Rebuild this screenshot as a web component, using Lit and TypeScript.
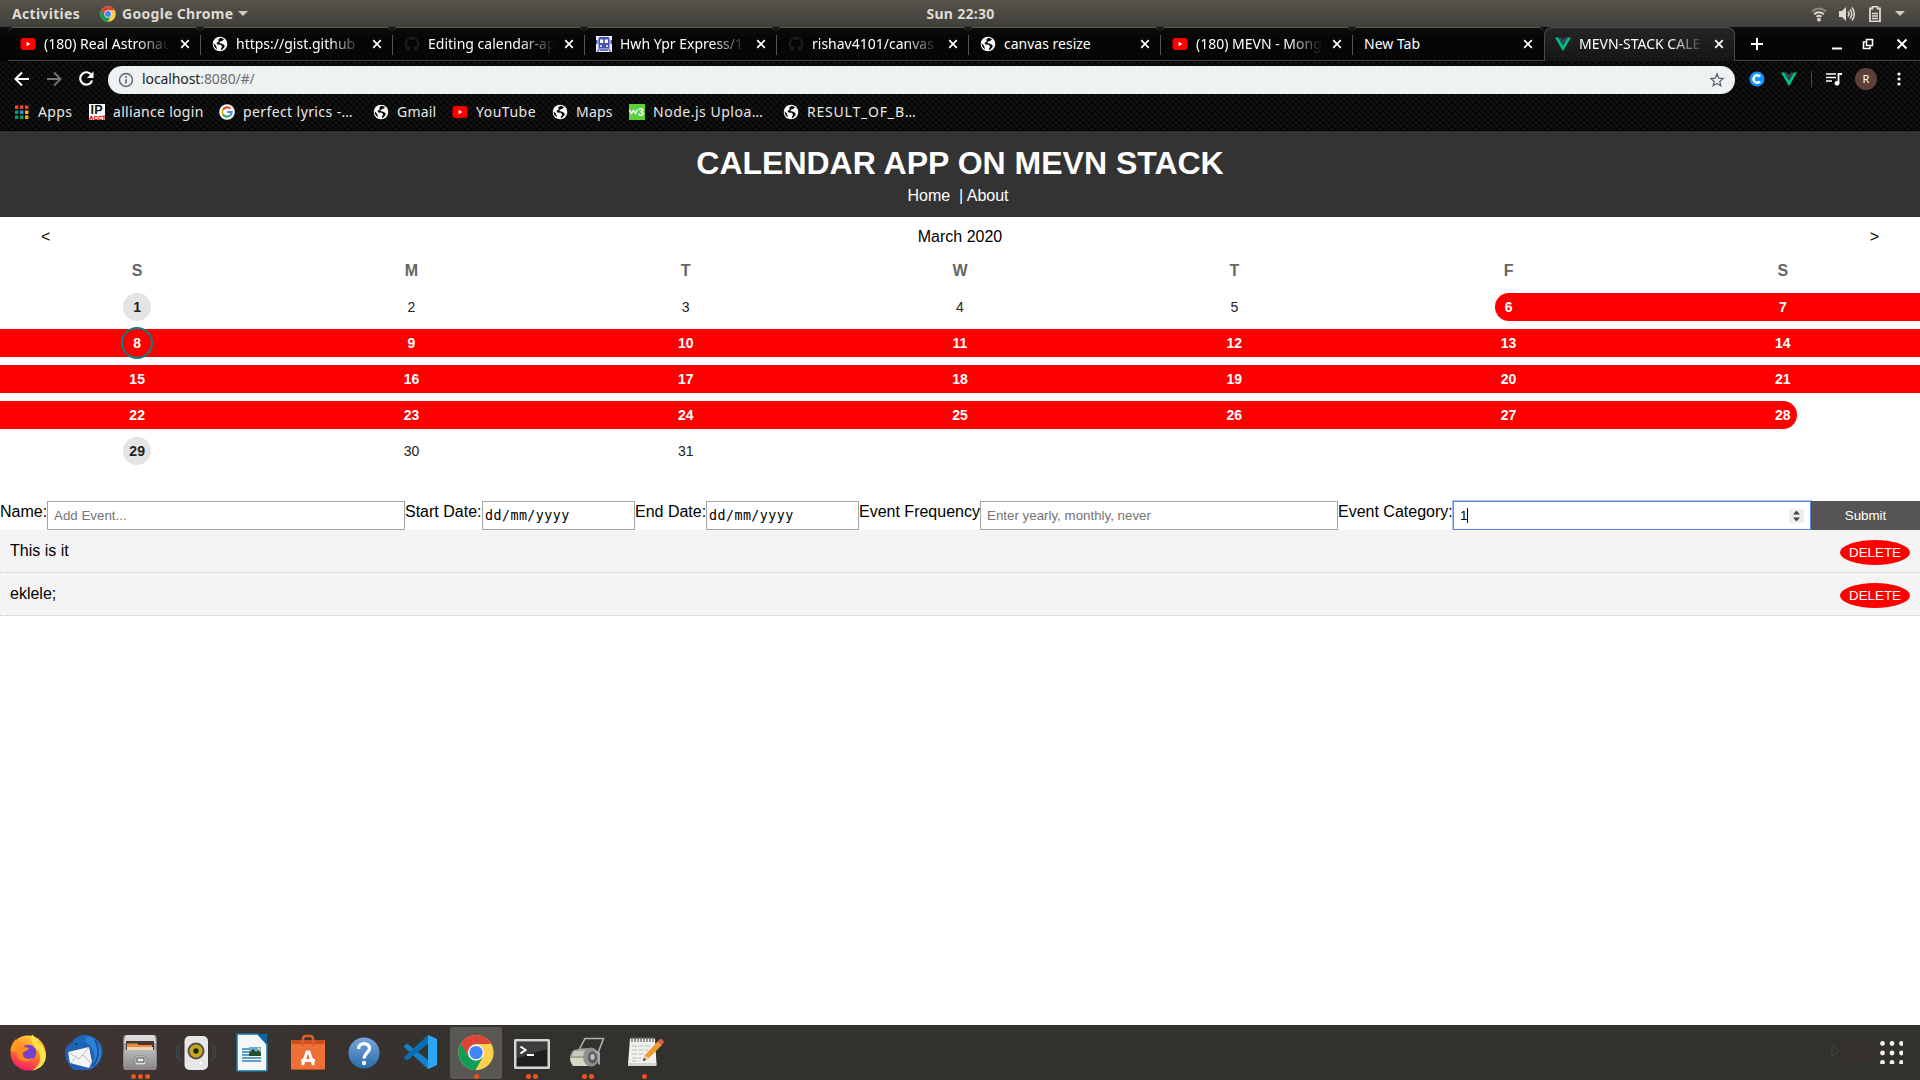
import { LitElement, html, svg, css, nothing, TemplateResult } from "lit";
import { customElement } from "lit/decorators.js";
import { classMap } from "lit/directives/class-map.js";
import { styleMap } from "lit/directives/style-map.js";

const icon = (size: number, box: string, body: TemplateResult | TemplateResult[]) =>
  html`<svg class="ico" width=${size} height=${size} viewBox=${box}>${body}</svg>`;

const youtube = () =>
  icon(16, "0 0 16 16", svg`<rect x="0.5" y="2" width="15" height="12" rx="3" fill="#f00"/><path d="M6.6 5.7v4.6L10.4 8z" fill="#fff"/>`);
const globe = () =>
  icon(16, "0 0 16 16", svg`<circle cx="8" cy="8" r="7.3" fill="#fff"/><path d="M8.6 1.8 6.2 3.6l.6 1.6-2.2 1.9.5 1.5 3.6.2 1.4 1.6-1.6 3.4 1.2.2 2.9-3-.2-2.1-2.8-1.5-2.2-.4.4-1.2 2.7-1.1 1.6-1.8zM1.6 7.2l2.3 2.4 1.3 3.6C2.9 12.2 1.6 10 1.6 7.2z" fill="#0a0a0a"/>`);
const github = () =>
  icon(16, "0 0 16 16", svg`<path d="M5.8 15c-3-.9-5.2-3.700-5.200-7A7.400 7.400 0 0 1 8 .7 7.400 7.400 0 0 1 15.400 8c0 3.300-2.200 6.100-5.200 7v-2.600c0-.8-.3-1.200-.6-1.500 1.900-.2 3.300-1.200 3.300-3.800 0-.8-.3-1.500-.8-2 .1-.5.1-1.300-.1-1.900-.8 0-1.500.5-2 .8a7 7 0 0 0-4 0c-.5-.3-1.200-.8-2-.8-.2.6-.2 1.400-.1 1.900-.5.5-.8 1.200-.8 2 0 2.600 1.400 3.600 3.300 3.800-.3.300-.6.700-.6 1.500z" fill="#181b1e"/>`);
const train = () =>
  icon(16, "0 0 16 16", svg`<rect width="16" height="16" fill="#e8ecf8"/><rect x="2.500" y="1" width="11" height="11.500" rx="1.500" fill="#3f51b5"/><rect x="0" y="4" width="1.500" height="4" fill="#3f51b5"/><rect x="14.500" y="4" width="1.500" height="4" fill="#3f51b5"/><rect x="4" y="3.500" width="3.200" height="3.500" fill="#fff"/><rect x="8.800" y="3.500" width="3.200" height="3.500" fill="#fff"/><circle cx="5" cy="10" r="1" fill="#fff"/><circle cx="11" cy="10" r="1" fill="#fff"/><path d="M3.500 12.500 1.500 15.500M12.500 12.500l2 3M4 14h8" stroke="#3f51b5" stroke-width="1.300"/>`);
const vue = () =>
  icon(16, "0 0 16 16", svg`<path d="M0 1.500h3.300L8 9.500l4.700-8H16L8 15.200z" fill="#00c07f"/><path d="M3.300 1.500h3L8 4.300l1.700-2.800h3L8 9.500z" fill="#35495e"/>`);
const google = () =>
  icon(16, "0 0 17 17", svg`<circle cx="8.500" cy="8.500" r="8.300" fill="#fff"/><g fill="none" stroke-width="2.300"><path d="M12.200 5A5 5 0 0 0 4.200 6.100" stroke="#ea4335"/><path d="M4.200 6.100a5 5 0 0 0 0 4.900" stroke="#fbbc05"/><path d="M4.200 11a5 5 0 0 0 7.600 1.200" stroke="#34a853"/><path d="M11.800 12.200A5 5 0 0 0 13.400 8.500H8.700" stroke="#4285f4"/></g>`);
const chromeArt = () =>
  svg`<circle cx="24" cy="24" r="23.500" fill="#fdd14d"/><path d="M3.600 12.300A23.500 23.500 0 0 0 23 47.500L33.500 29.500 24 24z" fill="#0f9d58"/><path d="M3.600 12.300 14.500 30 24 24V12.500h20.400A23.500 23.500 0 0 0 3.600 12.300z" fill="#db4437"/><circle cx="24" cy="24" r="11" fill="#f1f1f1"/><circle cx="24" cy="24" r="8.800" fill="#4285f4"/>`;
const appsGrid = () => {
  const colors = ["#f44336", "#f44336", "#f44336", "#0f9d58", "#2196f3", "#ffb300", "#0f9d58", "#0f9d58", "#ffb300"];
  return icon(16, "0 0 16 16", colors.map((c, i) => svg`<rect x=${1 + (i % 3) * 5} y=${1.5 + Math.floor(i / 3) * 5} width="3.400" height="3.400" fill=${c}/>`));
};
const ipacct = () =>
  icon(16, "0 0 16 16", svg`<rect width="16" height="16" fill="#fff"/><text x="1.500" y="10" font-family="Liberation Sans" font-weight="700" font-size="12.500" fill="#111">IP</text><text x="0.300" y="15.700" font-family="Liberation Sans" font-weight="700" font-size="5.600" fill="#e00" stroke="#e00" stroke-width=".3">ACCT</text>`);
const w3 = () =>
  icon(16, "0 0 16 16", svg`<rect width="16" height="16" fill="#5bd23b"/><path d="M.3 5.500 2.500 9.500 4.500 6.500l2 3 2-4" stroke="#fff" stroke-width="1.400" fill="none"/><text x="9" y="11.500" font-family="Liberation Sans" font-weight="700" font-size="10.500" fill="#fff">3</text>`);

interface Tab { title: string; fav: (() => TemplateResult) | null; active?: boolean; fade?: boolean }
const TABS: Tab[] = [
  { title: "(180) Real Astronau", fav: youtube, fade: true },
  { title: "https://gist.github", fav: globe, fade: true },
  { title: "Editing calendar-ap", fav: github, fade: true },
  { title: "Hwh Ypr Express/1", fav: train, fade: true },
  { title: "rishav4101/canvas", fav: github, fade: true },
  { title: "canvas resize", fav: globe },
  { title: "(180) MEVN - Mong", fav: youtube, fade: true },
  { title: "New Tab", fav: null },
  { title: "MEVN-STACK CALE", fav: vue, active: true, fade: true },
];

const BOOKMARKS = [
  { label: "Apps", fav: appsGrid, w: 75, ls: 0.4 },
  { label: "alliance login", fav: ipacct, w: 130, ls: 0.3 },
  { label: "perfect lyrics -…", fav: google, w: 154, ls: 0.4 },
  { label: "Gmail", fav: globe, w: 79, ls: 0.2 },
  { label: "YouTube", fav: youtube, w: 100, ls: 0.5 },
  { label: "Maps", fav: globe, w: 77, ls: 0.2 },
  { label: "Node.js Uploa…", fav: w3, w: 154, ls: 0.52 },
  { label: "RESULT_OF_B…", fav: globe, w: 140, ls: 0.8 },
];

const DOCK: { name: string; dots: number; active?: boolean; art: TemplateResult }[] = [
  { name: "firefox", dots: 0, art: svg`<circle cx="20" cy="21" r="17.500" fill="url(#ff)"/><path d="M24 2.500c3 2 5 5 6 8 5 3 8 8 8 13 0 8-6 14-14 15 9-5 11-14 4-22-3-4-6-8-4-14z" fill="#ffe14a"/><path d="M2.500 19C3 13 5 10 8 7l3 5c3-1 7 0 9 2l-5 4 1 4z" fill="#ff9a1f"/><circle cx="20.500" cy="20.500" r="7.800" fill="#7542c9"/><path d="M8 15c4-2 9 0 13 1-1 3-5 3-6 5-1 5 5 7 10 5-3 5-13 5-16-2z" fill="#ff8b20"/>` },
  { name: "thunderbird", dots: 0, art: svg`<path d="M8 10C12 3 22 1 29 5c8 4 11 11 9 19-2 7-7 12-14 14H10C1 31-1 20 3 14z" fill="#2161b4"/><path d="M12 7C20 1 31 4 35 13c5 10 1 18-9 25 4-7 6-14 3-20C26 11 19 8 12 7z" fill="#2d80d5"/><path d="M31 8c4 7 5 17-2 26" fill="none" stroke="#174a95" stroke-width="1.500"/><path d="M4 20 25 15 28 30 25 36 6 31z" fill="#f5f5f6"/><path d="M4 20l11 7 10-12M11 26l-4 5M19 23l8 8" fill="none" stroke="#b9bcc2"/><path d="M10 15C11 4 19 1 26 4c-5 1-6 4-4 8-4-1-8 0-12 3z" fill="#1669bd"/><circle cx="12.500" cy="12" r="1" fill="#123"/>` },
  { name: "files", dots: 3, art: svg`<rect x="3.500" y="3" width="33" height="35" rx="3" fill="#a8a8a8"/><path d="M6 3h28l2.500 8h-33z" fill="#d9d9d9"/><rect x="6" y="9" width="28" height="10" fill="#443936"/><path d="M7 11.500h10l2 1.500h13v5H7z" fill="#f28b3c"/><path d="M7 15h26v3H7z" fill="#ead5b5"/><rect x="3.500" y="18" width="33" height="20" rx="2" fill="url(#metal)"/><rect x="15" y="24" width="11" height="9" rx="2" fill="#dedede" stroke="#888"/><rect x="17" y="26" width="7" height="4" fill="#eee" stroke="#444"/>` },
  { name: "rhythmbox", dots: 0, art: svg`<path d="M5 12c-3 5-3 12 0 17M1.500 14c-2 5-2 9 0 13M35 12c3 5 3 12 0 17M38.500 14c2 5 2 9 0 13" stroke="#3e5260" fill="none"/><rect x="8.500" y="4" width="23.500" height="34" rx="5" fill="#e7e7e7"/><circle cx="20" cy="19" r="8.500" fill="#56534c"/><circle cx="20" cy="19" r="6.500" fill="#c7a91f"/><circle cx="20" cy="19" r="2.700" fill="#222"/><circle cx="25" cy="31" r="2.500" fill="#fff" stroke="#d5d5d5"/>` },
  { name: "writer", dots: 0, art: svg`<path d="M5 2h21l9 10v27H5z" fill="#f7f7f7" stroke="#1574a8" stroke-width="1.500"/><path d="M25 2h10v11z" fill="#0967a7"/><path d="M10 17h8M10 20h8M10 23h8M10 26h19M10 29h19" stroke="#2d83b7" stroke-width="1.700"/><rect x="17" y="15" width="12" height="9" fill="#62b0dd"/><path d="M17 24v-3l4-4 3 3 2-2 3 3v3z" fill="#294d27"/><circle cx="27" cy="17" r="1.300" fill="#ffd84d"/>` },
  { name: "software", dots: 0, art: svg`<path d="M3 8h34v30H3z" fill="#ee7036"/><path d="M3 8h34l-1.500 4H4.500z" fill="#c9501f"/><path d="M15 14V7q0-3 3-3h4q3 0 3 3v7" fill="none" stroke="#df5b2b" stroke-width="2.500"/><path d="M14.500 33l4.500-13h2l4.500 13M13 28.500h14" fill="none" stroke="#fff" stroke-width="3"/><path d="M3 37.500h34" stroke="#b84a1c"/>` },
  { name: "help", dots: 0, art: svg`<circle cx="20" cy="21" r="15.500" fill="url(#help)"/><path d="M14.500 17c0-7 11-7 11-.5 0 4-5.500 5-5.500 10" fill="none" stroke="#fff" stroke-width="3.300"/><circle cx="20" cy="31" r="2.200" fill="#fff"/>` },
  { name: "code", dots: 0, art: svg`<path d="M28 3 37 7V33L28 37 3.500 14.500 7 11.500 28 28z" fill="#1283cb"/><path d="M28 3 3.500 25.500 7 28.500 28 12z" fill="#0a6eb4"/><path d="M28 3 37 7V33L28 37z" fill="#2aa7f2"/>` },
  { name: "chrome", dots: 1, active: true, art: svg`<svg x="2" y="2.500" width="36" height="36" viewBox="0 0 48 48">${chromeArt()}</svg>` },
  { name: "terminal", dots: 2, art: svg`<rect x="2" y="7" width="36" height="30" rx="1.500" fill="#d5d5d5"/><rect x="4.500" y="9.500" width="31" height="25" fill="#1e1e1e"/><path d="M5 10h30v7L5 26z" fill="#3d3d3d"/><path d="M8.500 14.500l5 3.500-5 3.500M15 23h7" stroke="#fff" stroke-width="2" fill="none"/>` },
  { name: "tape", dots: 2, art: svg`<path d="M11 18 17 6.500H35.500L30 21" fill="none" stroke="#b0b0b0" stroke-width="1.600"/><path d="M6 18q6-2 17-2l3 18H5q-3-4-3-9 1-5 4-7z" fill="#a3a396"/><path d="M2 26h17v8H5q-3-4-3-8z" fill="#d8d8c0"/><path d="M6 19h15v5H4z" fill="#c9c9c2"/><ellipse cx="23" cy="25" rx="8" ry="9.500" fill="#909090"/><ellipse cx="24.500" cy="25.500" rx="4.500" ry="6" fill="#5c5c5c"/><ellipse cx="24.500" cy="25" rx="2.200" ry="3" fill="#bdbdbd"/><path d="M27.500 19.500 31 21v11.500" fill="none" stroke="#b8b8b8" stroke-width="1.700"/>` },
  { name: "editor", dots: 1, art: svg`<path d="M6 6.500h25l1.500 26H4z" fill="#f1f1ee"/><path d="M4 31h28.500v3H4z" fill="#d2d2ce"/><path d="M8 5v5M11 5v5M14 5v5M17 5v5M20 5v5M23 5v5M26 5v5M29 5v5" stroke="#666" stroke-width="1.300"/><path d="M8 14h19M8 18h16M8 22h13M8 26h9M8 29h7" stroke="#bbb" stroke-dasharray="5 1.500"/><path d="M19 29l2-6 13-14 4 4-13 13z" fill="#f09a33"/><path d="M34 9l2-2q3 0 4 3l-2 3z" fill="#e2574c"/><path d="M19 29l2-6 4 3z" fill="#e9c79b"/><path d="M19 29l1-3 2 2z" fill="#222"/>` },
];

@customElement("app-root")
export class AppRoot extends LitElement {
  static styles = css`
    :host { display: block; width: 1920px; height: 1080px; overflow: hidden; background: #fff; font-family: "Liberation Sans", Arial, sans-serif; font-size: 16px; color: #000; }
    * { box-sizing: border-box; }
    .screen { width: 1920px; height: 1080px; display: flex; flex-direction: column; }
    .ico { display: block; flex: none; }
    .system { height: 27px; flex: none; display: grid; grid-template-columns: 1fr auto 1fr; align-items: center; padding: 0 12px; background: linear-gradient(#57534b, #403f3a); color: #dfdbd2; font: 700 14px/26px "Noto Sans", "Open Sans", sans-serif; letter-spacing: 0.3px; }
    .left, .right { display: flex; align-items: center; }
    .activities { width: 88px; }
    .appname { width: 116px; padding-left: 6px; white-space: nowrap; }
    .caret-down { width: 0; height: 0; border: 5px solid transparent; border-top-color: #d0cdc6; border-bottom: 0; margin-left: 6px; }
    .right { justify-content: flex-end; gap: 12px; }
    .right .caret-down { margin-left: 0; margin-right: 3px; }
    .clock { padding-left: 1px; }

    .browser { height: 104px; flex: none; background-color: #040404; background-image: radial-gradient(circle, #121212 1.400px, transparent 2px), radial-gradient(circle, #121212 1.400px, transparent 2px); background-size: 6px 6px; background-position: 0 0, 3px 3px; color: #fff; font-family: "Noto Sans", "Open Sans", sans-serif; font-size: 14px; border-bottom: 1px solid #000; }
    .tabs { height: 34px; display: flex; padding-left: 8px; background: linear-gradient(#0c0c0c, #050505 40%, #060606); }
    .tab { width: 192px; height: 34px; flex: none; display: flex; align-items: center; padding: 0 0 1px 12px; border-top: 1px solid #5c5a57; border-bottom: 1px solid #444; border-radius: 6px 6px 0 0; position: relative; }
    .tab + .tab::before { content: ""; position: absolute; left: 0; top: 7px; width: 1px; height: 20px; background: #555; }
    .tab.active { width: 191px; padding-left: 10px; border: 1px solid #4b4b4b; border-bottom: 0; border-radius: 8px 8px 0 0; background: #1c1c1c; background-image: linear-gradient(#252525, #151515); }
    .tab.tab.active::before { display: none; }
    .title { width: 129px; margin-left: 8px; overflow: hidden; white-space: nowrap; line-height: 20px; }
    .active .title { width: 128px; }
    .nofav .title { margin-left: 0; width: 152px; }
    .title.fade { -webkit-mask-image: linear-gradient(90deg, #000 72%, transparent 98%); mask-image: linear-gradient(90deg, #000 72%, transparent 98%); }
    .tab .close { margin-left: 7px; }
    .rest { flex: 1; display: flex; align-items: center; border-bottom: 1px solid #444; padding: 0 12px 0 14px; }
    .spacer { flex: 1; }
    .min { margin-right: 19px; }
    .restore { margin-right: 22px; }

    .toolbar { height: 36px; display: flex; align-items: center; padding-left: 13px; }
    .nav { display: flex; gap: 14px; width: 95px; }
    .omnibox { width: 1627px; height: 28px; border-radius: 14px; background: #eef2f3; display: flex; align-items: center; padding: 0 9px 0 10px; color: #222; margin-top: 1px; }
    .url { margin-left: 8px; flex: 1; letter-spacing: -0.1px; margin-top: -2px; }
    .port { color: #6d6d6d; }
    .exts { flex: 1; display: flex; align-items: center; padding-left: 14px; }
    .c-ext { margin-right: 16px; }
    .divider { width: 1px; height: 16px; background: #4c4c4c; margin: 0 14px 0 14px; }
    .avatar { width: 22px; height: 22px; border-radius: 50%; background: #5d4037; color: #fff; font-size: 11px; text-align: center; line-height: 22px; margin: 0 20px 0 13px; }
    .bookmarks { height: 30px; display: flex; align-items: center; padding: 0 0 1px 14px; font-size: 14px; color: #e8e8e8; }
    .bm { display: flex; align-items: center; gap: 8px; white-space: nowrap; }
    .bm span { margin-top: -1px; }

    .page { flex: 1; background: #fff; display: flex; flex-direction: column; }
    .header { height: 86px; background: #333; color: #fff; text-align: center; padding-top: 10px; }
    .header h1 { margin: 0; font-size: 32px; line-height: 44px; }
    .links { line-height: 22px; margin-left: -4px; white-space: pre; }
    .monthbar { height: 38px; display: flex; justify-content: space-between; align-items: center; padding: 2px 41px 0; }
    .week { display: grid; grid-template-columns: repeat(7, 1fr); }
    .wd { height: 32px; line-height: 32px; text-align: center; color: #666; font-weight: 700; margin-bottom: 2px; }
    .day { height: 36px; padding: 4px 0; display: flex; justify-content: center; font-size: 14px; line-height: 28px; color: #222; }
    .band { flex: 1; text-align: center; }
    .band.mark { flex: none; width: 28px; border-radius: 50%; background: #e4e4e4; font-weight: 700; }
    .band.event { background: #f00; color: #fff; font-weight: 700; display: flex; justify-content: center; }
    .band.start { margin-left: 124px; border-radius: 14px 0 0 14px; padding-right: 124px; }
    .band.end { margin-right: 123px; border-radius: 0 14px 14px 0; padding-left: 123px; }
    .today { width: 32px; height: 32px; margin: -2px 0 0; border: 2px solid #008489; border-radius: 50%; text-align: center; }

    .form { display: flex; height: 29px; margin-top: 32px; white-space: nowrap; }
    .form label { line-height: 21px; flex: none; overflow: visible; }
    .l1 { width: 47px; } .l2 { width: 77px; } .l3 { width: 71px; } .l4 { width: 121px; } .l5 { width: 115px; }
    .field { width: 358px; height: 29px; border: 1px solid #a6a6a6; padding: 0 6px; font: 13.333px "Liberation Sans", Arial, sans-serif; background: #fff; border-radius: 0; }
    .field::placeholder { color: #757575; }
    .date { width: 153px; height: 29px; border: 1px solid #a6a6a6; padding-left: 2px; font: 13.333px/27px "DejaVu Sans Mono", monospace; letter-spacing: 0.450px; }
    .number { border-color: #5f86e0; box-shadow: 0 0 0 1px #a9c3f5; display: flex; align-items: center; }
    .typed { border-right: 1px solid #000; line-height: 15px; }
    .spin { margin-left: auto; width: 15px; height: 14px; background: #eee; }
    .submit { flex: 1; border: 0; background: #555; color: #fff; font: 13.333px "Liberation Sans", Arial, sans-serif; }
    .row { height: 43px; background: #f4f4f4; border-bottom: 1px dotted #ccc; padding: 10px 10px 0; display: flex; justify-content: space-between; line-height: 21px; }
    .del { width: 70px; height: 25px; border: 0; padding: 0; border-radius: 50%; background: #f00; color: #fff; font: 13.333px "Liberation Sans", Arial, sans-serif; }

    .dock { height: 55px; flex: none; display: flex; background: linear-gradient(90deg, #403432, #33312d 28%); }
    .app { width: 56px; height: 55px; display: flex; justify-content: center; position: relative; padding-top: 2px; }
    .slot { width: 52px; height: 52px; display: flex; justify-content: center; padding-top: 5px; border-radius: 3px; }
    .app.active .slot { background: #595754; }
    .dots { position: absolute; left: 0; right: 0; top: 49px; display: flex; justify-content: center; gap: 2px; }
    .dot { width: 5px; height: 5px; border-radius: 50%; background: #e95420; }
    .ghost { margin: 17px 0 0 auto; }
    .grid { margin: 16px 17px 0 0; }
  `;

  private days() {
    const cells: TemplateResult[] = [];
    for (let d = 1; d <= 31; d++) {
      const event = d >= 6 && d <= 28;
      const cls = classMap({ band: true, event, mark: d === 1 || d === 29, start: d === 6, end: d === 28 });
      cells.push(html`<div class="day"><div class=${cls}>${d === 8 ? html`<span class="today">8</span>` : d}</div></div>`);
    }
    return cells;
  }

  private tab(t: Tab) {
    return html`<div class=${classMap({ tab: true, active: !!t.active, nofav: !t.fav })}>
      ${t.fav ? t.fav() : nothing}
      <span class=${classMap({ title: true, fade: !!t.fade })}>${t.title}</span>
      <svg class="ico close" width="10" height="10" viewBox="0 0 10 10"><path d="M1.200 1.200l7.600 7.600M8.800 1.200 1.200 8.800" stroke="#fff" stroke-width="1.700"/></svg>
    </div>`;
  }

  render() {
    return html`<div class="screen">
      <div class="system">
        <div class="left"><span class="activities">Activities</span>${icon(16, "0 0 48 48", chromeArt())}<span class="appname">Google Chrome</span><i class="caret-down"></i></div>
        <span class="clock">Sun 22:30</span>
        <div class="right">
          <svg width="16" height="16" viewBox="0 0 16 16" fill="none" stroke="#dedad2" stroke-width="1.800"><path d="M1 5.500q7-6 14 0" stroke="#8c8982"/><path d="M3 8.200q5-4 10 0M5.500 10.800q2.500-2 5 0"/><circle cx="8" cy="13.700" r="1" fill="#dedad2"/></svg>
          <svg width="16" height="16" viewBox="0 0 16 16" fill="none" stroke="#dedad2" stroke-width="1.500"><path d="M0 5h3l4-4v14l-4-4H0z" fill="#dedad2" stroke="none"/><path d="M9 5.500q2 2.500 0 5M11 3.500q3.500 4.500 0 9M13 1.500q4.500 6.500 0 13"/></svg>
          <svg width="16" height="16" viewBox="0 0 16 16"><path d="M3 2.500h2.500V.5h5v2H13V15.500H3z" fill="none" stroke="#dedad2" stroke-width="1.800"/><path d="M5 7.500h6M5 10h6M5 12.500h6" stroke="#dedad2" stroke-width="1.500"/></svg>
          <i class="caret-down"></i>
        </div>
      </div>
      <div class="browser">
        <div class="tabs">
          ${TABS.map((t) => this.tab(t))}
          <div class="rest">
            <svg width="16" height="16" viewBox="0 0 16 16"><path d="M8 2v12M2 8h12" stroke="#fff" stroke-width="2"/></svg>
            <i class="spacer"></i>
            <svg class="min" width="12" height="12" viewBox="0 0 12 12"><path d="M1 10.500h10" stroke="#fff" stroke-width="2"/></svg>
            <svg class="restore" width="12" height="12" viewBox="0 0 12 12" fill="none" stroke="#fff" stroke-width="1.600"><path d="M4.500 1.500h6v6h-6zM3.500 4H1.500v6.500H8V8.500"/></svg>
            <svg width="12" height="12" viewBox="0 0 12 12"><path d="M1.500 1.500l9 9M10.500 1.500l-9 9" stroke="#fff" stroke-width="1.900"/></svg>
          </div>
        </div>
        <div class="toolbar">
          <div class="nav">
            <svg width="18" height="18" viewBox="0 0 18 18" fill="none" stroke="#fff" stroke-width="2"><path d="M16 9H3M9 2.500 2.500 9 9 15.500"/></svg>
            <svg width="18" height="18" viewBox="0 0 18 18" fill="none" stroke="#777" stroke-width="1.800"><path d="M2 9h13M9 2.500 15.500 9 9 15.500"/></svg>
            <svg width="18" height="18" viewBox="0 0 18 18"><path d="M14.500 5A6.200 6.200 0 1 0 15.200 10.500" fill="none" stroke="#fff" stroke-width="2.200"/><path d="M16.500 1.500v6.500H10z" fill="#fff"/></svg>
          </div>
          <div class="omnibox">
            <svg width="16" height="16" viewBox="0 0 16 16"><circle cx="8" cy="8" r="6.500" fill="none" stroke="#5f6368" stroke-width="1.400"/><path d="M8 7.200v4.300M8 4.300v1.600" stroke="#5f6368" stroke-width="1.600"/></svg>
            <span class="url">localhost<span class="port">:8080/#/</span></span>
            <svg width="18" height="18" viewBox="0 0 18 18"><path d="M9 3l1.700 4.100 4.400.4-3.300 2.900 1 4.300L9 12.400l-3.800 2.300 1-4.300L2.900 7.500l4.400-.4z" fill="none" stroke="#5f6368" stroke-width="1.300"/></svg>
          </div>
          <div class="exts">
            <svg class="c-ext" width="16" height="16" viewBox="0 0 16 16"><circle cx="8" cy="8" r="7.500" fill="#1293ff"/><path d="M11 5.600a3.700 3.700 0 1 0 0 4.800" fill="none" stroke="#fff" stroke-width="2.500"/></svg>
            ${vue()}
            <i class="divider"></i>
            <svg width="16" height="16" viewBox="0 0 16 16"><path d="M0 3h10M0 6.500h10M0 10h6" stroke="#fff" stroke-width="1.700"/><path d="M12.500 12V3H16" fill="none" stroke="#fff" stroke-width="1.800"/><circle cx="11" cy="12.300" r="2.400" fill="#fff"/></svg>
            <span class="avatar">R</span>
            <svg width="4" height="16" viewBox="0 0 4 16" fill="#fff"><circle cx="2" cy="3" r="1.600"/><circle cx="2" cy="8" r="1.600"/><circle cx="2" cy="13" r="1.600"/></svg>
          </div>
        </div>
        <div class="bookmarks">
          ${BOOKMARKS.map((b) => html`<div class="bm" style=${styleMap({ width: b.w + "px", letterSpacing: b.ls + "px" })}>${b.fav()}<span>${b.label}</span></div>`)}
        </div>
      </div>
      <div class="page">
        <div class="header"><h1>CALENDAR APP ON MEVN STACK</h1><div class="links"><a>Home</a>  | <a>About</a></div></div>
        <div class="monthbar"><span>&lt;</span><span>March 2020</span><span>&gt;</span></div>
        <div class="week">${[..."SMTWTFS"].map((d) => html`<div class="wd">${d}</div>`)}${this.days()}</div>
        <div class="form">
          <label class="l1">Name:</label><input class="field" placeholder="Add Event..." />
          <label class="l2">Start Date:</label><div class="date">dd/mm/yyyy</div>
          <label class="l3">End Date:</label><div class="date">dd/mm/yyyy</div>
          <label class="l4">Event Frequency</label><input class="field" placeholder="Enter yearly, monthly, never" />
          <label class="l5">Event Category:</label>
          <div class="field number"><span class="typed">1</span>
            <svg class="spin" width="15" height="14" viewBox="0 0 15 14"><path d="M4 5.500 7.500 1.500 11 5.500zM4 8.500h7L7.500 12.500z" fill="#444"/></svg></div>
          <button class="submit">Submit</button>
        </div>
        ${["This is it", "eklele;"].map((t) => html`<div class="row"><span>${t}</span><button class="del">DELETE</button></div>`)}
      </div>
      <div class="dock">
        ${DOCK.map((a) => html`<div class=${classMap({ app: true, active: !!a.active })}><div class="slot">
          <svg width="40" height="40" viewBox="0 0 40 40">
            <defs>
              <linearGradient id="ff" x1="0.700" y1="0" x2="0.300" y2="1"><stop offset="0" stop-color="#ffd83a"/><stop offset=".5" stop-color="#ff7b2a"/><stop offset="1" stop-color="#f5156c"/></linearGradient>
              <linearGradient id="metal" x1="0" y1="0" x2="0" y2="1"><stop offset="0" stop-color="#b9b9b9"/><stop offset="1" stop-color="#858585"/></linearGradient>
              <linearGradient id="help" x1="0" y1="0" x2="0" y2="1"><stop offset="0" stop-color="#76a5dc"/><stop offset="1" stop-color="#2a6dab"/></linearGradient>
            </defs>${a.art}</svg></div>
          <div class="dots">${Array.from({ length: a.dots }, () => html`<i class="dot"></i>`)}</div></div>`)}
        <svg class="ghost" width="49" height="20" viewBox="0 0 49 20"><path d="M1 3v11l7-5.500z" fill="none" stroke="#484641"/><path d="M11 15.500 46 14" stroke="#412d29"/><text x="9" y="12.500" font-family="Liberation Sans" font-size="10" textLength="38" fill="#40352f">IELECTR</text></svg>
        <svg class="grid" width="23" height="23" viewBox="0 0 23 23" fill="#f2f2f2">
          ${[0, 1, 2, 3, 4, 5, 6, 7, 8].map((i) => svg`<circle cx=${2.5 + (i % 3) * 9.5} cy=${2.5 + Math.floor(i / 3) * 9.5} r="2.400"/>`)}
        </svg>
      </div>
    </div>`;
  }
}
